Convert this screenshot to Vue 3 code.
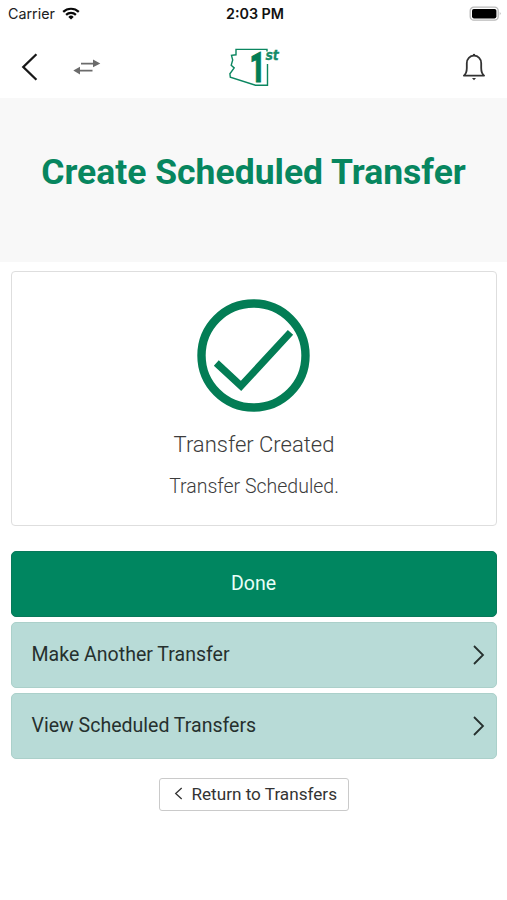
<script setup>
const actions = ['Make Another Transfer', 'View Scheduled Transfers']
</script>

<template>
  <div class="screen">
    <div class="status">
      <div class="carrier">
        <span>Carrier</span>
        <svg width="18" height="13" viewBox="0 0 18 13" fill="none" stroke="#080808" stroke-width="2.2">
          <path d="M1.2 4.9A11.2 11.2 0 0 1 16.8 4.9" />
          <path d="M4.1 7.9A7 7 0 0 1 13.9 7.9" />
          <path d="M9 12.6L6.3 9.9A3.9 3.9 0 0 1 11.7 9.9Z" fill="#080808" stroke="none" />
        </svg>
      </div>
      <time>2:03 PM</time>
      <svg class="battery" width="33" height="16" viewBox="0 0 33 16">
        <rect x="1.2" y="1.2" width="28" height="13" rx="3.6" fill="#fff" stroke="#b9b9b9" stroke-width="1.3" />
        <rect x="3" y="3" width="24.4" height="9.4" rx="1.8" fill="#000" />
        <path d="M30.8 5.7Q32.4 7.5 30.8 9.5Z" fill="#999" />
      </svg>
    </div>

    <nav class="nav">
      <div class="nav-left">
        <svg width="18" height="30" viewBox="0 0 18 30" fill="none" stroke="#181818" stroke-width="2.3">
          <path d="M16.4 2.2L3.3 15L16.4 27.8" />
        </svg>
        <svg width="28" height="16" viewBox="0 0 28 16" fill="#6b6b6b">
          <path d="M8 3.7H20V0.6L27.3 4.5L20 8.3V5.4H8ZM19.5 10.8H7V7.8L0.3 11.5L7 15.4V12.4H19.5Z" />
        </svg>
      </div>
      <svg class="logo" width="54" height="60" viewBox="0.5 -9 54 60">
        <path d="M40.5 5.5V3.4H9.5V8.8L5 9.4L6.2 14L4.7 19.2L7.7 21.9L3.4 27.8L3.8 31.1L29 39.2H41V18" fill="none" stroke="#0b8660" stroke-width="1.4" />
        <text class="logo-one" x="22.9" y="36" textLength="15.8" lengthAdjust="spacingAndGlyphs">1</text>
        <text class="logo-st" x="38.9" y="13.5" textLength="13.4" lengthAdjust="spacingAndGlyphs">st</text>
      </svg>
      <svg class="bell" width="26" height="30" viewBox="0 0 26 30" fill="none" stroke="#333" stroke-width="1.8" stroke-linejoin="round">
        <path d="M2.9 23.6H23.1C20.9 21.8 20.2 19.5 20.2 16V11.2C20.2 6.9 17.2 3.7 13 3.7S5.8 6.9 5.8 11.2V16C5.8 19.5 5.1 21.8 2.9 23.6Z" />
        <path d="M11.9 2.9H14.1" stroke-width="2" />
        <path d="M11 26H15L13 28.2Z" fill="#333" stroke="none" />
      </svg>
    </nav>

    <header class="hero"><h1>Create Scheduled Transfer</h1></header>

    <main>
      <section class="card">
        <svg width="114" height="114" viewBox="0 0 114 114" fill="none" stroke="#037d55">
          <circle cx="56.5" cy="56.5" r="52" stroke-width="8.4" />
          <path d="M19.3 64L44 87L93.5 33.4" stroke-width="7.2" />
        </svg>
        <h2>Transfer Created</h2>
        <p>Transfer Scheduled.</p>
      </section>
      <button class="btn done">Done</button>
      <button v-for="label in actions" :key="label" class="btn action">
        <span>{{ label }}</span>
        <svg width="13" height="20" viewBox="0 0 13 20" fill="none" stroke="#26302e" stroke-width="1.8">
          <path d="M2 1L11 10L2 19" />
        </svg>
      </button>
      <button class="return">
        <svg width="9" height="13" viewBox="0 0 9 13" fill="none" stroke="#333" stroke-width="1.3">
          <path d="M7.7 1L1.7 6.5L7.7 12" />
        </svg>
        <span>Return to Transfers</span>
      </button>
    </main>
  </div>
</template>

<style>
body { background: #fff; }
</style>

<style scoped>
.screen {
  height: 900px;
  overflow: hidden;
  background: #fff;
  font-family: Roboto, "Liberation Sans", sans-serif;
}
svg { display: block; flex: none; }
.status {
  display: grid;
  grid-template-columns: 1fr auto 1fr;
  align-items: center;
  height: 27px;
  padding: 0 5px 0 8px;
  font-family: Inter, "Liberation Sans", sans-serif;
  font-size: 14.3px;
  color: #202020;
}
.carrier { display: flex; align-items: center; gap: 7px; }
.status time { font-weight: 600; color: #111; }
.battery { justify-self: end; }
.nav {
  display: grid;
  grid-template-columns: 1fr auto 1fr;
  align-items: center;
  height: 71px;
  padding: 9px 20px 0;
  box-sizing: border-box;
}
.nav-left { display: flex; align-items: center; gap: 35px; }
.logo { justify-self: center; }
.bell { justify-self: end; }
.logo-one { font: 900 43px Roboto, sans-serif; fill: #037d55; stroke: #037d55; stroke-width: 0.8; }
.logo-st { font: italic 700 14px "DejaVu Sans", sans-serif; fill: #168b68; stroke: #168b68; stroke-width: 0.3; }
.hero {
  height: 164px;
  box-sizing: border-box;
  padding-top: 52px;
  background: #f8f8f8;
  text-align: center;
}
h1 {
  margin: 0;
  font-size: 35.5px;
  font-weight: 700;
  line-height: 44px;
  color: #07865f;
  white-space: nowrap;
}
main {
  display: flex;
  flex-direction: column;
  padding: 9px 10px 0 11px;
}
.card {
  display: flex;
  flex-direction: column;
  align-items: center;
  height: 255px;
  box-sizing: border-box;
  padding-top: 27px;
  margin-bottom: 25px;
  border: 1px solid #dedede;
  border-radius: 4px;
  color: #3c3c3c;
  font-weight: 300;
}
h2 {
  margin: 18px 0 0;
  font-size: 22px;
  font-weight: 300;
  line-height: 28px;
}
p { margin: 15px 0 0; font-size: 19.5px; line-height: 26px; }
.btn {
  display: flex;
  align-items: center;
  height: 66px;
  margin: 0 0 5px;
  border: 1px solid #abd0ca;
  border-radius: 5px;
  font: 400 19.55px Roboto, sans-serif;
}
.done {
  justify-content: center;
  background: #008660;
  border-color: #08785a;
  color: #e9fff8;
  padding: 0 1px 1px 0;
}
.action {
  justify-content: space-between;
  padding: 0 11px 0 19.5px;
  background: #b8dbd7;
  color: #26302e;
}
.action span { margin-bottom: 2px; }
.return {
  display: flex;
  align-items: center;
  justify-content: flex-end;
  gap: 8px;
  align-self: center;
  width: 190px;
  height: 33px;
  margin: 14px 0 0;
  padding: 0 11px 0 0;
  border: 1px solid #cacaca;
  border-radius: 3px;
  background: #fff;
  color: #333;
  font: 400 17.15px Roboto, sans-serif;
}
.return svg { margin-bottom: 3px; }
.return span { margin-bottom: 2px; }
</style>
